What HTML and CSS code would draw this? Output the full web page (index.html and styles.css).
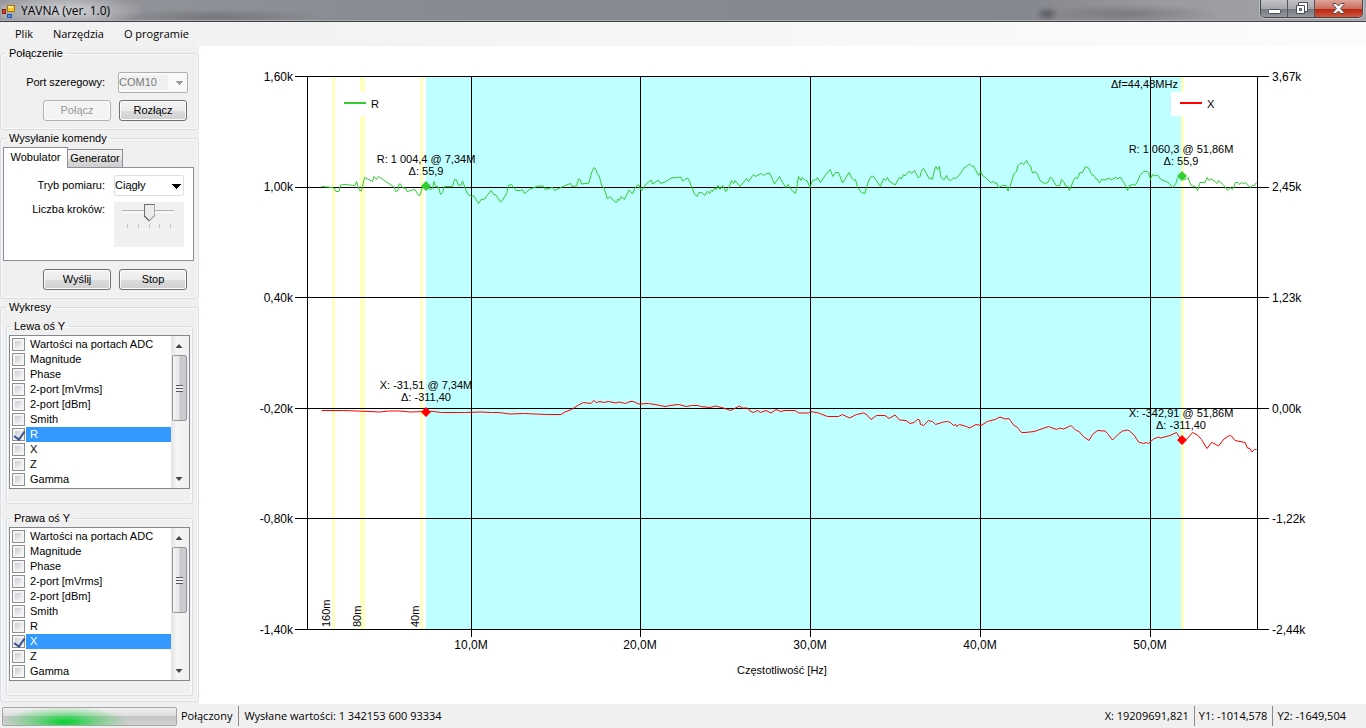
FILE: index.html
```html
<!DOCTYPE html>
<html lang="pl">
<head>
<meta charset="utf-8">
<title>YAVNA (ver. 1.0)</title>
<link rel="stylesheet" href="styles.css">
</head>
<body>
<header class="titlebar">
  <svg class="app-icon" width="14" height="14" viewBox="0 0 14 14" aria-hidden="true">
    <rect x="0" y="0" width="13" height="13" fill="#aaacb0"/>
    <rect x="5.500" y=".5" width="7" height="6" fill="#fcc62e" stroke="#a9780b"/>
    <rect x="6" y="1" width="5" height="2" fill="#ffe58c"/>
    <rect x=".5" y="4.500" width="3" height="4" fill="#d8442d" stroke="#8e2018"/>
    <rect x="5.500" y="9.500" width="4" height="3" fill="#5a8fe8" stroke="#2c56a8"/>
  </svg>
  <h1 class="title">YAVNA (ver. 1.0)</h1>
  <div class="window-buttons">
    <button class="win-btn" aria-label="Minimalizuj">
      <svg width="13" height="12" viewBox="0 0 13 12"><rect x=".5" y="6.500" width="12" height="4" rx="1" fill="#fff" stroke="#4a4d5c"/></svg>
    </button>
    <button class="win-btn" aria-label="Przywróć">
      <svg width="13" height="13" viewBox="0 0 13 13"><path d="M3.500.5h9v9h-9z" fill="#fff" stroke="#4a4d5c"/><path d="M1.500 3.500h8v8h-8z" fill="#fff" stroke="#4a4d5c"/><path d="M4.500 6.500h2v2h-2z" fill="#8d8f9a" stroke="#4a4d5c"/></svg>
    </button>
    <button class="win-btn close" aria-label="Zamknij">
      <svg width="13" height="11" viewBox="0 0 13 11"><path d="M1 .5h3l2.500 2.500L9 .5h3v1L8.500 5.500 12 9.500v1H9L6.500 8 4 10.500H1v-1l3.500-4L1 1.500z" fill="#fff" stroke="#5b4248"/></svg>
    </button>
  </div>
</header>

<nav class="menu">
  <button class="menu-item">Plik</button>
  <button class="menu-item">Narzędzia</button>
  <button class="menu-item">O programie</button>
</nav>

<main class="workspace">
  <aside class="sidebar">
    <fieldset class="group">
      <legend>Połączenie</legend>
      <div class="form-row port-row">
        <label for="port">Port szeregowy:</label>
        <select id="port" class="combo" disabled><option>COM10</option></select>
      </div>
      <div class="buttons">
        <button class="btn" disabled>Połącz</button>
        <button class="btn">Rozłącz</button>
      </div>
    </fieldset>

    <fieldset class="group">
      <legend>Wysyłanie komendy</legend>
      <div class="tabs" role="tablist">
        <button class="tab active" role="tab" aria-selected="true">Wobulator</button>
        <button class="tab" role="tab" aria-selected="false">Generator</button>
      </div>
      <div class="tab-panel" role="tabpanel">
        <div class="form-row">
          <label for="mode">Tryb pomiaru:</label>
          <select id="mode" class="combo"><option>Ciągły</option></select>
        </div>
        <div class="form-row slider-row">
          <label for="steps">Liczba kroków:</label>
          <div class="slider">
            <input id="steps" type="range" min="0" max="4" value="2">
            <div class="ticks"><i></i><i></i><i></i><i></i><i></i></div>
          </div>
        </div>
      </div>
      <div class="buttons">
        <button class="btn">Wyślij</button>
        <button class="btn">Stop</button>
      </div>
    </fieldset>

    <fieldset class="group charts">
      <legend>Wykresy</legend>
      <fieldset class="group axis">
        <legend>Lewa oś Y</legend>
        <div class="listbox">
          <div class="items">
            <label class="item"><input type="checkbox"><span>Wartości na portach ADC</span></label>
            <label class="item"><input type="checkbox"><span>Magnitude</span></label>
            <label class="item"><input type="checkbox"><span>Phase</span></label>
            <label class="item"><input type="checkbox"><span>2-port [mVrms]</span></label>
            <label class="item"><input type="checkbox"><span>2-port [dBm]</span></label>
            <label class="item"><input type="checkbox"><span>Smith</span></label>
            <label class="item selected"><input type="checkbox" checked><span>R</span></label>
            <label class="item"><input type="checkbox"><span>X</span></label>
            <label class="item"><input type="checkbox"><span>Z</span></label>
            <label class="item"><input type="checkbox"><span>Gamma</span></label>
          </div>
          <div class="scrollbar"><span class="arrow up"></span><span class="thumb"></span><span class="arrow down"></span></div>
        </div>
      </fieldset>
      <fieldset class="group axis">
        <legend>Prawa oś Y</legend>
        <div class="listbox">
          <div class="items">
            <label class="item"><input type="checkbox"><span>Wartości na portach ADC</span></label>
            <label class="item"><input type="checkbox"><span>Magnitude</span></label>
            <label class="item"><input type="checkbox"><span>Phase</span></label>
            <label class="item"><input type="checkbox"><span>2-port [mVrms]</span></label>
            <label class="item"><input type="checkbox"><span>2-port [dBm]</span></label>
            <label class="item"><input type="checkbox"><span>Smith</span></label>
            <label class="item"><input type="checkbox"><span>R</span></label>
            <label class="item selected"><input type="checkbox" checked><span>X</span></label>
            <label class="item"><input type="checkbox"><span>Z</span></label>
            <label class="item"><input type="checkbox"><span>Gamma</span></label>
          </div>
          <div class="scrollbar"><span class="arrow up"></span><span class="thumb"></span><span class="arrow down"></span></div>
        </div>
      </fieldset>
    </fieldset>
  </aside>

  <section class="chart">
    <svg class="plot" viewBox="199 46 1167 658" role="img" aria-label="Wykres R i X w funkcji częstotliwości">
      <rect class="span" x="426" y="77" width="755" height="552"/>
      <g class="band">
        <rect x="332" y="77" width="3" height="552"/>
        <rect x="360" y="77" width="5" height="552"/>
        <rect x="420" y="77" width="3" height="552"/>
        <rect x="1181" y="77" width="3" height="552"/>
      </g>
      <g class="grid">
        <path d="M295 76.500H1269M295 187.500H1269M295 297.500H1269M295 408.500H1269M295 518.500H1269M295 629.500H1269"/>
        <path d="M307.500 76V630M471.500 76V637M640.500 76V637M810.500 76V637M980.500 76V637M1150.500 76V637M1257.500 76V630"/>
      </g>
      <polyline class="curve r" points="321.500,186.500 328,187 334,188 336,191.500 339,191.500 340.500,185 345,184.500 355,185.500 356.500,181.500 359.500,190.500 361.500,190.500 364.500,177.500 372.500,181.500 374,176.500 376.500,179.500 378.500,176.500 394.500,187.500 395.500,191.500 398,190.500 399,184 400.500,184 402.500,188 405.500,188 407,191.500 415,189.500 418.500,195.500 420,195 422.500,187 426,186.500 430,189.500 432.500,188.500 434,181.500 435.500,186.500 438.500,187 440.500,194.500 442.500,192.500 444.500,186.500 452.500,186.500 454.500,179.500 456.500,180 458.500,185.500 461,185 462.500,181 467.500,194 471.500,196.500 473.500,195.500 478.500,203.500 481.500,199 483.500,200 491,190.500 493.500,194.500 495.500,194.500 500.500,202 502.500,200.500 506.500,193.500 508.500,185.500 511.500,184.500 513.500,187.500 516,190.500 520.500,190.500 522.500,189.500 524.500,193.500 530,189 538.500,186 543.500,186 545,189.500 552.500,187.500 554.500,190.500 560,188 565,185.500 570.500,183.500 572,186.500 576.500,186 578.500,179 580,179.500 581.500,184 589,183 591.500,172.500 594,167.500 595.500,169 597.500,174.500 599,175.500 602,186.500 603.500,187 607.500,199 610,196.500 613.500,200.500 616.500,202.500 618,199 619.500,200.500 621,196.500 624.500,199.500 629,190 632.500,194 635.500,187 638.500,184.500 641.500,191 646.500,183.500 651.500,180 652.500,184 658.500,180 660.500,183.500 665,182 671.500,178 681,177 682.500,181 687.500,178 689.500,181 691.500,187 694.500,194 697,196.500 699,192.500 701.500,192.500 705,195.500 707.500,191 709.500,193.500 711.500,190 712.500,191.500 715,187.500 716,189.500 718,185.500 720,189.500 722.500,185.500 726,191.500 730,185 731.500,180.500 733.500,183.500 735,180.500 740,186.500 746.500,178.500 748.500,181.500 753.500,174.500 755.500,176.500 761.500,173.500 763.500,175.500 766.500,173.500 770,173.500 772.500,179.500 774.500,184 779.500,176.500 782,181.500 786,187.500 788,184.500 791.500,190 795.500,193.500 796.500,188.500 798.500,176.500 801,180.500 802.500,177.500 805.500,180.500 807,180.500 810,187.500 812.500,180.500 816.500,179.500 817.500,177.500 820.500,182.500 825,175.500 830,169.500 833,176.500 835.500,172.500 838.500,172.500 842.500,183 849,172.500 852,178.500 854,180.500 855.500,179.500 857.500,187.500 861.500,192.500 865,193.500 866.500,187.500 869,180 871.500,176 873.500,176.500 880.500,186.500 883.500,178.500 885.500,180.500 887.500,177.500 889,181 895,185 899.500,177.500 902,178.500 903.500,174.500 905,176 909.500,171 911.500,173.500 914.500,170.500 918.500,178 920,176.500 921.500,170.500 923.500,168.500 929.500,179 931.500,177.500 932.500,179.500 934.500,170 936,166.500 937.500,169.500 939.500,166.500 940.500,176 942.500,179 944.500,179.500 946.500,175.500 948.500,179.500 950.500,180.500 953.500,178 955.500,178.500 959,175.500 964,168 966.500,166.500 969.500,164 972,166.500 973.500,166 978.500,175.500 981,171.500 982.500,175.500 985.500,177.500 990.500,182.500 993.500,181.500 995,183.500 996.500,182.500 998.500,187.500 1002.500,185.500 1006,185.500 1008,191 1010,186.500 1014,173.500 1016.500,171.500 1018,165.500 1020,163.500 1021.500,163 1023.500,164.500 1026.500,160.500 1028.500,164.500 1030.500,166 1032.500,173 1035.500,171.500 1038,175.500 1040,180.500 1043.500,183 1047.500,183 1050.500,177 1052.500,179 1056,185.500 1059.500,186 1061.500,179.500 1064,182.500 1065.500,186 1067.500,186 1069.500,190.500 1073.500,180.500 1075.500,177.500 1077.500,178.500 1080,172.500 1082.500,172.500 1085.500,166.500 1089,168.500 1091.500,174.500 1094,175.500 1095.500,178.500 1097,179 1099.500,183 1101.500,179.500 1106,180 1108,178 1111.500,179.500 1116,177.500 1118,179 1120,177 1124.500,183.500 1127.500,190.500 1129.500,185.500 1133.500,184.500 1135,185.500 1138,180.500 1140,175.500 1143.500,171.500 1147,171.500 1148.500,172.500 1150.500,179.500 1152.500,174.500 1155.500,176 1157.500,175 1161,179.500 1168.500,182.500 1172.500,187.500 1175.500,184.500 1177.500,178 1181.500,175.500 1184.500,179.500 1186,179.500 1188,177.500 1191,185.500 1195.500,186.500 1197.500,190.500 1200,182.500 1205,182.500 1207,177.500 1209,180.500 1211,179 1214.500,181 1217,183.500 1218.500,180.500 1223.500,185 1227.500,190.500 1230,187.500 1232.500,189.500 1235.500,182.500 1238,182.500 1239.500,184.500 1241.500,182.500 1244,183.500 1245.500,182.500 1250,187.500 1252.500,185.500 1254,186 1256.500,182.500"/>
      <polyline class="curve x" points="321.500,410.500 343.500,410.500 370,411.500 379.500,412 388.500,411 400,411 410,412 425.500,411.500 433.500,411.500 441.500,412.500 458.500,412.500 464.500,412.500 480,412 491.500,412.500 498.500,412.500 510,414 523.500,413.500 546.500,414.500 561,414.500 565,412 571.500,409.500 578.500,405 583.500,402.500 591,403.500 593.500,400.500 596.500,402.500 600,401.500 603.500,402.500 608.500,401.500 616,403 618.500,402 621.500,402.500 625.500,403.500 630,401.500 633.500,401.500 638.500,404 648.500,403.500 655,404.500 665,406.500 670,405.500 678.500,404.500 686.500,406.500 691.500,405.500 698.500,405.500 700.500,406.500 710,407.500 715.500,406 723.500,408 730.500,410.500 739.500,406 742.500,408 747.500,408 750,411 753.500,412.500 757.500,410.500 760.500,412.500 766,410.500 771,413 776,409.500 780.500,411.500 785,410.500 795,410.500 798.500,413 808.500,413 810.500,411.500 818.500,413 827.500,416.500 838.500,416.500 842.500,414.500 849.500,418 856.500,414.500 863.500,413 866,414 871,419.500 876.500,415.500 885,415.500 889,418.500 895,415 899.500,420 906,420.500 910,423.500 914,422.500 918,419 919.500,420 920.500,424.500 923.500,425.500 928.500,420.500 932.500,421.500 935.500,424.500 943.500,422 947.500,421.500 950.500,422.500 953.500,425.500 955.500,424.500 956.500,426.500 959.500,424.500 966.500,426.500 969.500,428 976,424.500 981,425.500 987.500,421.500 995,419.500 1000,417 1005.500,419 1009,418.500 1013.500,425 1017.500,427.500 1021.500,432.500 1025,432.500 1030,432 1034,431.500 1038.500,430 1048.500,426.500 1056.500,429.500 1059.500,428 1063.500,429 1071,425.500 1076,430.500 1078.500,431 1083.500,436.500 1089,440.500 1092.500,434.500 1097.500,430.500 1105,431 1107.500,433.500 1112.500,440 1119,433.500 1122.500,431 1127.500,430 1129.500,431 1134,435 1138.500,442 1143.500,443.500 1146.500,442.500 1148.500,443.500 1153.500,439 1158.500,437 1160.500,438 1170,435.500 1176.500,432.500 1181.500,440.500 1186.500,439.500 1192.500,432.500 1197.500,435 1201.500,439.500 1207,448.500 1211.500,442.500 1215,444 1218.500,446 1224,439 1229.500,435.500 1231.500,436 1235,440.500 1245,442.500 1247.500,448 1250,448.500 1252,452 1254.500,449.500 1256.500,449.500"/>
      <g class="marker-r">
        <path d="M426 181l5 5-5 5-5-5zM1182 171l5 5-5 5-5-5z"/>
      </g>
      <g class="marker-x">
        <path d="M426 407l5 5-5 5-5-5zM1182 435l5 5-5 5-5-5z"/>
      </g>

      <rect class="legend-box" x="336" y="92" width="60" height="24"/>
      <rect class="legend-box" x="1171" y="92" width="60" height="24"/>
      <path class="key r" d="M344 103H366"/>
      <path class="key x" d="M1180 103H1202"/>
      <g class="note">
        <text x="371" y="108">R</text>
        <text x="1207" y="108">X</text>
        <text x="1111" y="88">Δf=44,48MHz</text>
        <text class="mid" x="426" y="163">R: 1 004,4 @ 7,34M</text>
        <text class="mid" x="426" y="175">Δ: 55,9</text>
        <text class="mid" x="1181" y="153">R: 1 060,3 @ 51,86M</text>
        <text class="mid" x="1181" y="165">Δ: 55,9</text>
        <text class="mid" x="426" y="389">X: -31,51 @ 7,34M</text>
        <text class="mid" x="426" y="401">Δ: -311,40</text>
        <text class="mid" x="1181" y="417">X: -342,91 @ 51,86M</text>
        <text class="mid" x="1181" y="429">Δ: -311,40</text>
        <text class="mid" x="782" y="674">Częstotliwość [Hz]</text>
        <text transform="translate(330 627) rotate(-90)">160m</text>
        <text transform="translate(361 627) rotate(-90)">80m</text>
        <text transform="translate(419 627) rotate(-90)">40m</text>
      </g>
      <g class="scale">
        <text class="end" x="293" y="81">1,60k</text>
        <text class="end" x="293" y="191">1,00k</text>
        <text class="end" x="293" y="302">0,40k</text>
        <text class="end" x="293" y="413">-0,20k</text>
        <text class="end" x="293" y="523">-0,80k</text>
        <text class="end" x="293" y="634">-1,40k</text>
        <text x="1272" y="81">3,67k</text>
        <text x="1272" y="191">2,45k</text>
        <text x="1272" y="302">1,23k</text>
        <text x="1272" y="413">0,00k</text>
        <text x="1272" y="523">-1,22k</text>
        <text x="1272" y="634">-2,44k</text>
        <text class="mid" x="471" y="649">10,0M</text>
        <text class="mid" x="640" y="649">20,0M</text>
        <text class="mid" x="810" y="649">30,0M</text>
        <text class="mid" x="980" y="649">40,0M</text>
        <text class="mid" x="1150" y="649">50,0M</text>
      </g>
    </svg>
  </section>
</main>

<footer class="statusbar">
  <div class="progress" role="progressbar" aria-label="Połączenie"></div>
  <span class="state">Połączony</span>
  <span class="sent">Wysłane wartości: 1 342153 600 93334</span>
  <span class="coord">X: 19209691,821</span>
  <span class="coord">Y1: -1014,578</span>
  <span class="coord">Y2: -1649,504</span>
</footer>
</body>
</html>
```
FILE: styles.css
```css
* { box-sizing: border-box; }

body {
  margin: 0;
  min-height: 100vh;
  display: flex;
  flex-direction: column;
  background: #f0f0f0;
  color: #000;
  font: 11px/13px "Liberation Sans", Arial, sans-serif;
}

button, select, input { font: inherit; color: inherit; margin: 0; }

/* Title bar */
.titlebar {
  height: 22px;
  display: flex;
  align-items: flex-start;
  padding: 0 3px 0 2px;
  border-bottom: 1px solid #404247;
  box-shadow: inset 0 -1px #a9abb0;
  background:
    radial-gradient(ellipse 80px 18px at 65px 11px, rgba(255, 255, 255, .6), transparent),
    radial-gradient(ellipse 12px 8px at 1047px 14px, rgba(50, 52, 58, .5), transparent),
    radial-gradient(ellipse 90px 10px at 1130px 14px, rgba(80, 82, 86, .4), transparent),
    radial-gradient(ellipse 110px 8px at 215px 17px, rgba(80, 82, 86, .4), transparent),
    linear-gradient(90deg, #94969c, #898b92 30%, #85878e 75%, #9a9b9e 85%, #a3a4a8);
}
.app-icon { margin-top: 5px; }
.title {
  flex: 1;
  margin: 3px 0 0 5px;
  font: 400 12px/16px "Open Sans", sans-serif;
}
.window-buttons {
  display: flex;
  border: 1px solid #43454d;
  border-top: 0;
  border-radius: 0 0 5px 5px;
  overflow: hidden;
  box-shadow: 0 0 0 1px rgba(255, 255, 255, .35);
}
.win-btn {
  width: 27px;
  height: 17px;
  display: flex;
  align-items: center;
  justify-content: center;
  padding: 0;
  border: 0;
  border-right: 1px solid #55575f;
  background: linear-gradient(#c3c4c8, #a6a8ad 50%, #74767e 51%, #9698a0);
}
.win-btn.close {
  width: 47px;
  border-right: 0;
  background: linear-gradient(#dba598, #cc6f5f 50%, #b3240e 51%, #d0553a);
}

/* Menu */
.menu {
  height: 24px;
  display: flex;
  padding-left: 5px;
  background: linear-gradient(90deg, #f0f0f0, #fcfcfc);
}
.menu-item {
  padding: 0 10px;
  border: 0;
  background: none;
  font: 11px/20px "Open Sans", sans-serif;
}

/* Workspace */
.workspace { flex: 1; display: flex; background: #fff; }
.sidebar {
  width: 199px;
  flex: none;
  display: flex;
  flex-direction: column;
  gap: 2px;
  padding: 1px 0 2px;
  background: #f0f0f0;
}
.group {
  min-width: 0;
  margin: 0;
  padding: 0 0 8px;
  border: 1px solid #d5dfe5;
  border-radius: 3px;
  box-shadow: inset 0 0 0 1px #fafafa;
}
.group legend { margin-left: 5px; padding: 0 3px; }

.form-row { display: grid; grid-template-columns: 1fr 70px; column-gap: 9px; }
.form-row label { text-align: right; padding-top: 4px; }
.port-row { margin: 12px 10px 7px 0; column-gap: 13px; }

.combo {
  height: 21px;
  padding: 0 18px 1px 0;
  border: 1px solid #dce1e8;
  border-radius: 2px;
  appearance: none;
  background:
    linear-gradient(#000, #000) 57px 8px / 9px 1px no-repeat,
    linear-gradient(#000, #000) 58px 9px / 7px 1px no-repeat,
    linear-gradient(#000, #000) 59px 10px / 5px 1px no-repeat,
    linear-gradient(#000, #000) 60px 11px / 3px 1px no-repeat,
    linear-gradient(#000, #000) 61px 12px / 1px 1px no-repeat,
    #fff;
}
.combo:disabled {
  opacity: 1;
  color: #7a7a7a;
  border-color: #adb2b5;
  background:
    linear-gradient(#9a9a9a, #9a9a9a) 57px 8px / 7px 1px no-repeat,
    linear-gradient(#9a9a9a, #9a9a9a) 58px 9px / 5px 1px no-repeat,
    linear-gradient(#9a9a9a, #9a9a9a) 59px 10px / 3px 1px no-repeat,
    linear-gradient(#9a9a9a, #9a9a9a) 60px 11px / 1px 1px no-repeat,
    linear-gradient(#f0f0f0, #f0f0f0) 2px 2px / 47px 15px no-repeat,
    #f9f9f9;
}

.buttons { display: flex; justify-content: flex-end; gap: 8px; padding-right: 11px; }
.btn {
  width: 68px;
  height: 21px;
  padding: 0;
  border: 1px solid #707070;
  border-radius: 3px;
  background: linear-gradient(#f3f3f3, #ebebeb 50%, #dddddd 51%, #cfcfcf);
  box-shadow: inset 0 0 0 1px #fbfbfb;
}
.btn:disabled { color: #9a9a9a; border-color: #adb2b5; background: #f4f4f4; }

/* Tabs */
.tabs { display: flex; align-items: flex-end; height: 20px; margin: 2px 0 0 2px; }
.tab {
  width: 55px;
  height: 18px;
  padding: 0;
  border: 1px solid #8c8e99;
  border-left: 0;
  border-bottom: 0;
  background: linear-gradient(#f2f2f2, #ebebeb 50%, #dddddd 51%, #cdcdcd);
}
.tab.active {
  position: relative;
  width: 65px;
  height: 21px;
  margin-bottom: -1px;
  padding-bottom: 2px;
  border-left: 1px solid #8c8e99;
  background: #fff;
}
.tab-panel {
  height: 94px;
  margin: 0 4px 8px 2px;
  padding: 7px 9px 0 0;
  border: 1px solid #8c8e99;
  background: #fff;
}
.slider-row { margin-top: 6px; }
.slider-row label { padding-top: 1px; }
.slider { height: 45px; padding: 0 7px; background: #f0f0f0; }
.slider input {
  display: block;
  width: 100%;
  height: 21px;
  appearance: none;
  background: linear-gradient(#adb2b5, #adb2b5) 1px 8px / 52px 1px no-repeat, linear-gradient(#fff, #fff) 1px 10px / 52px 1px no-repeat, #f0f0f0;
}
.slider input::-webkit-slider-thumb {
  appearance: none;
  width: 11px;
  height: 18px;
  clip-path: polygon(0 0, 100% 0, 100% 70%, 50% 100%, 0 70%);
  background:
    linear-gradient(#6d7075, #6d7075) 0 0 / 11px 1px no-repeat,
    linear-gradient(#6d7075, #6d7075) 0 0 / 1px 13px no-repeat,
    linear-gradient(#6d7075, #6d7075) 10px 0 / 1px 13px no-repeat,
    conic-gradient(from -45deg at 50% 16px, #ececec 90deg, #6d7075 0);
}
.ticks { display: flex; justify-content: space-between; padding: 1px 6px 0; }
.ticks i { width: 1px; height: 4px; background: #c4c4c4; }

/* Axis lists */
.charts { padding: 6px 5px 5px; }
.charts > legend { margin-left: 0; }
.axis { padding: 2px 2px 14px; }
.axis + .axis { margin-top: 8px; }
.axis > legend { margin-left: 2px; }
.listbox { display: flex; border: 1px solid #828790; background: #fff; }
.items { flex: 1; padding: 1px 0 1px 2px; }
.item { display: flex; height: 15px; align-items: center; }
.item input {
  position: relative;
  flex: none;
  width: 13px;
  height: 13px;
  margin-right: 1px;
  padding: 2px;
  appearance: none;
  border: 1px solid #8e8f8f;
  background: linear-gradient(135deg, #c9ced4, #f6f6f6) content-box, #f4f4f4;
}
.item input:checked::after {
  content: "";
  position: absolute;
  left: 3px;
  top: 0;
  width: 5px;
  height: 9px;
  border: solid #3f5493;
  border-width: 0 2px 2px 0;
  transform: rotate(35deg);
}
.item span { flex: 1; line-height: 15px; padding-left: 4px; white-space: nowrap; }
.item.selected span { background: #3399ff; color: #fff; }

.scrollbar {
  width: 18px;
  flex: none;
  display: flex;
  flex-direction: column;
  align-items: center;
  padding: 1px 2px 0 0;
  background: linear-gradient(90deg, #e3e3e3, #f5f5f5 30%, #f0f0f0);
}
.arrow { width: 7px; height: 4px; background: #444; }
.arrow.up { margin: 7px 0; clip-path: polygon(50% 0, 100% 100%, 0 100%); }
.arrow.down { margin: auto 0 7px; clip-path: polygon(0 0, 100% 0, 50% 100%); }
.thumb {
  width: 15px;
  height: 66px;
  border: 1px solid #979797;
  border-radius: 2px;
  background:
    repeating-linear-gradient(#55585c 0 1px, #f3f3f3 1px 3px) 3px 29px / 7px 7px no-repeat,
    linear-gradient(90deg, #f5f5f5, #e6e7e8 45%, #c5c7ca 55%, #cccdd0);
}

/* Chart */
.chart { flex: 1; min-width: 0; display: flex; }
.plot { width: 100%; display: block; }
.span { fill: #c0ffff; }
.band { fill: #ffffc0; }
.grid { stroke: #000; fill: none; shape-rendering: crispEdges; }
.curve { fill: none; stroke-width: 1px; }
.r { stroke: #32cd32; }
.x { stroke: #f00; }
.key { stroke-width: 2px; }
.marker-r { fill: #32cd32; }
.marker-x { fill: #f00; }
.legend-box { fill: #fff; }
.note { font-size: 11px; }
.scale { font-size: 12px; }
.mid { text-anchor: middle; }
.end { text-anchor: end; }

/* Status bar */
.statusbar {
  height: 24px;
  display: flex;
  align-items: center;
  padding: 0 20px 0 2px;
  font: 11px/20px "Open Sans", sans-serif;
}
.progress {
  width: 175px;
  height: 19px;
  border: 1px solid #a5a5a5;
  border-radius: 2px;
  background:
    radial-gradient(ellipse 64px 15px at 62px 14px, #00d32a, rgba(0, 211, 42, .4) 50%, transparent),
    linear-gradient(#f0f0f0, #dedede 45%, #c6c6c6 50%, #d2d2d2);
}
.state { margin-left: 4px; padding-right: 6px; border-right: 1px solid #8a8a8a; }
.sent { flex: 1; padding-left: 5px; }
.coord + .coord { margin-left: 5px; padding-left: 4px; border-left: 1px solid #8a8a8a; }
```
